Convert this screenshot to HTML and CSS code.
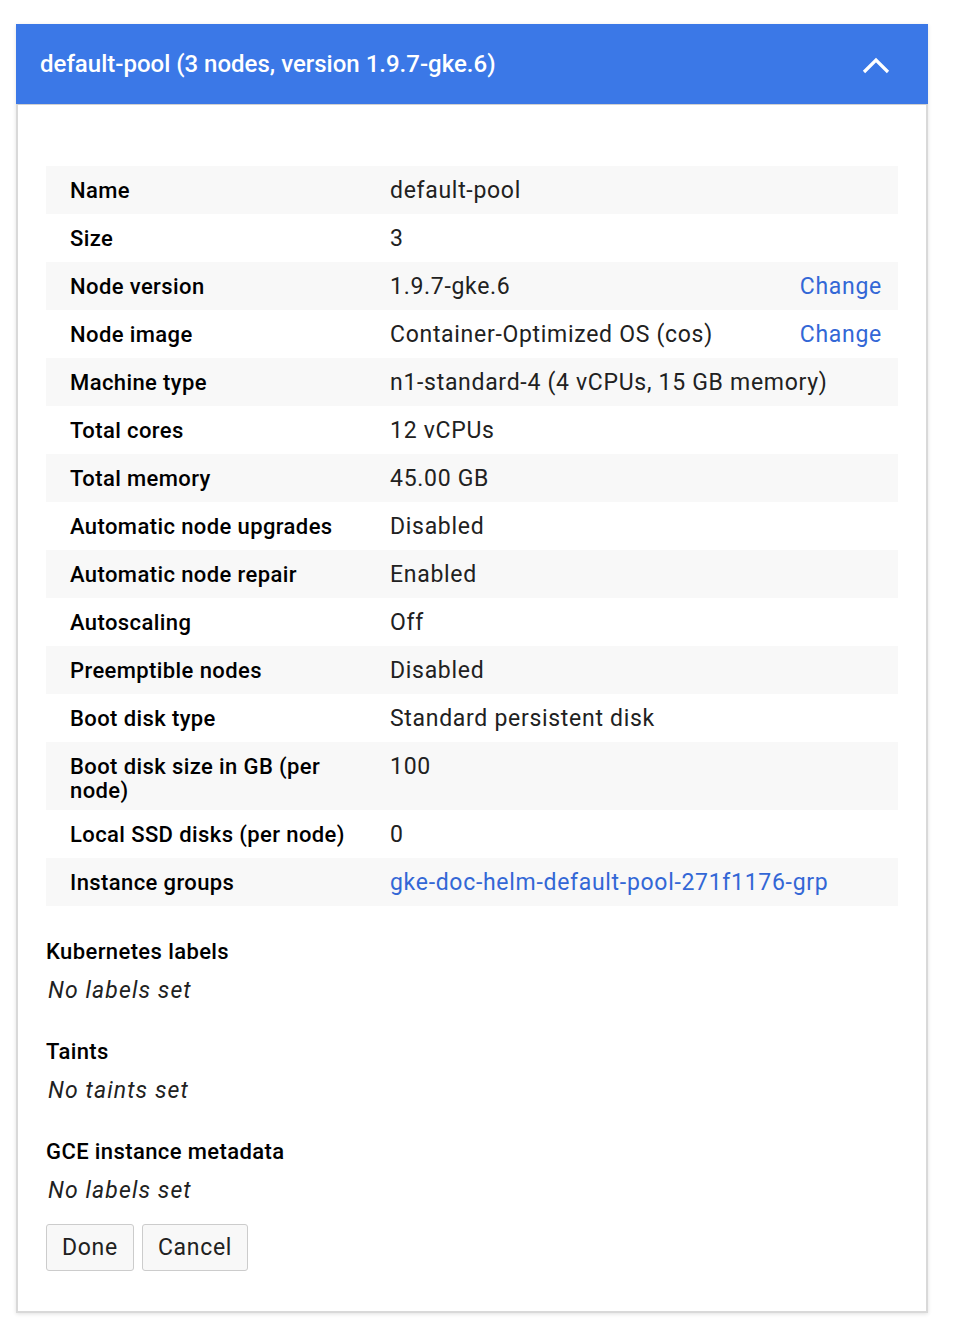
FILE: index.html
```html
<!DOCTYPE html>
<html>
<head>
<meta charset="utf-8">
<link rel="stylesheet" href="styles.css">
</head>
<body>
<div class="card">
  <div class="card-header">
    <span class="title">default-pool (3 nodes, version 1.9.7-gke.6)</span>
    <svg class="chevron" width="28" height="18" viewBox="0 0 28 18"><path d="M2 16 L14 4 L26 16" fill="none" stroke="#fff" stroke-width="3.2"/></svg>
  </div>
  <div class="card-body">
    <div class="table">
      <div class="row"><div class="label">Name</div><div class="value">default-pool</div></div>
      <div class="row"><div class="label">Size</div><div class="value">3</div></div>
      <div class="row"><div class="label">Node version</div><div class="value">1.9.7-gke.6</div><a class="change">Change</a></div>
      <div class="row"><div class="label">Node image</div><div class="value">Container-Optimized OS (cos)</div><a class="change">Change</a></div>
      <div class="row"><div class="label">Machine type</div><div class="value">n1-standard-4 (4 vCPUs, 15 GB memory)</div></div>
      <div class="row"><div class="label">Total cores</div><div class="value">12 vCPUs</div></div>
      <div class="row"><div class="label">Total memory</div><div class="value">45.00 GB</div></div>
      <div class="row"><div class="label">Automatic node upgrades</div><div class="value">Disabled</div></div>
      <div class="row"><div class="label">Automatic node repair</div><div class="value">Enabled</div></div>
      <div class="row"><div class="label">Autoscaling</div><div class="value">Off</div></div>
      <div class="row"><div class="label">Preemptible nodes</div><div class="value">Disabled</div></div>
      <div class="row"><div class="label">Boot disk type</div><div class="value">Standard persistent disk</div></div>
      <div class="row"><div class="label">Boot disk size in GB (per node)</div><div class="value">100</div></div>
      <div class="row"><div class="label">Local SSD disks (per node)</div><div class="value">0</div></div>
      <div class="row"><div class="label">Instance groups</div><div class="value"><a class="link">gke-doc-helm-default-pool-271f1176-grp</a></div></div>
    </div>
    <div class="section first">
      <div class="section-title">Kubernetes labels</div>
      <div class="empty">No labels set</div>
    </div>
    <div class="section">
      <div class="section-title">Taints</div>
      <div class="empty">No taints set</div>
    </div>
    <div class="section">
      <div class="section-title">GCE instance metadata</div>
      <div class="empty">No labels set</div>
    </div>
    <div class="buttons">
      <button class="btn">Done</button>
      <button class="btn">Cancel</button>
    </div>
  </div>
</div>
</body>
</html>
```
FILE: styles.css
```css
html, body {
  margin: 0;
  padding: 0;
  background: #fff;
}
body {
  font-family: Roboto, "Liberation Sans", sans-serif;
  color: #212121;
  padding: 24px 28px 30px 16px;
}
.card {
  width: 912px;
  box-shadow: 0 1px 4px rgba(0,0,0,0.12);
}
.card-header {
  height: 80px;
  background: #3b78e7;
  display: flex;
  align-items: center;
  justify-content: space-between;
  padding: 0 38px 0 24px;
  box-sizing: border-box;
}
.title {
  color: #fff;
  font-size: 24px;
  font-weight: 500;
  letter-spacing: 0;
}
.chevron {
  display: block;
  margin-top: 2px;
}
.card-body {
  border: 2px solid #d9d9d9;
  border-top: 1px solid #d0d0d0;
  padding: 61px 28px 40px 28px;
}
.table {
  display: flex;
  flex-direction: column;
}
.row {
  display: flex;
  align-items: flex-start;
  line-height: 24px;
  min-height: 48px;
  box-sizing: border-box;
  padding: 13px 16px 7px 24px;
}
.row:nth-child(odd) {
  background: #f8f8f8;
}
.label {
  width: 296px;
  flex: none;
  padding-right: 24px;
  font-size: 22px;
  letter-spacing: 0.4px;
  font-weight: 500;
  color: #000;
}
.value {
  flex: 1;
  font-size: 23px;
  letter-spacing: 0.7px;
  color: #212121;
}
.change {
  font-size: 23px;
  letter-spacing: 0.7px;
}
.change, .link {
  color: #3367d6;
}
.section {
  margin-top: 37px;
}
.section.first {
  margin-top: 34px;
}
.section-title {
  font-size: 22px;
  letter-spacing: 0.4px;
  line-height: 24px;
  font-weight: 500;
  color: #000;
}
.empty {
  margin-top: 15px;
  padding-left: 2px;
  font-size: 23px;
  letter-spacing: 1.1px;
  line-height: 24px;
  font-style: italic;
  color: #212121;
}
.buttons {
  display: flex;
  gap: 8px;
  margin-top: 21px;
}
.btn {
  font-family: Roboto, "Liberation Sans", sans-serif;
  font-size: 23px;
  letter-spacing: 0.7px;
  color: #212121;
  background: #f8f8f8;
  border: 1px solid #cccccc;
  border-radius: 3px;
  height: 47px;
  padding: 0 15px;
}
```
